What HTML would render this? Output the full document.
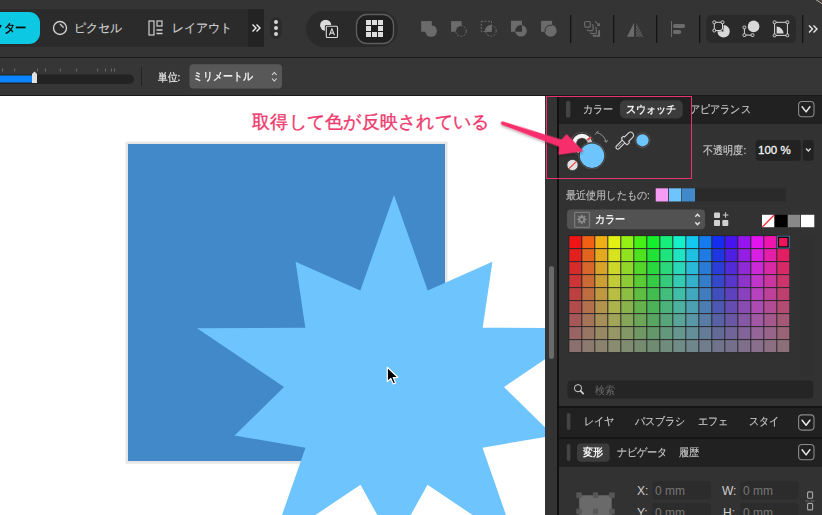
<!DOCTYPE html>
<html lang="ja"><head><meta charset="utf-8">
<style>
*{margin:0;padding:0;box-sizing:border-box}
html,body{width:822px;height:515px;overflow:hidden;background:#333;font-family:"Liberation Sans",sans-serif}
.a{position:absolute}
.t{position:absolute;white-space:nowrap;line-height:1}
</style></head><body>
<!-- TOP TOOLBAR -->
<div class="a" style="left:0;top:0;width:822px;height:57px;background:#343434"></div>
<div class="a" style="left:0;top:57px;width:822px;height:1px;background:#1a1a1a"></div>
<div class="a" style="left:-20px;top:9px;width:284px;height:38px;background:#2b2b2b"></div>
<div class="a" style="left:248px;top:9px;width:16px;height:38px;background:#232323"></div>
<div class="a" style="left:-20px;top:12px;width:60px;height:32px;background:#0cc8e2;border-radius:11px"></div>
<div class="t" style="left:-19px;top:21.5px;font-size:12px;color:#0a0a0a;font-weight:bold;transform:scaleX(0.95);transform-origin:0 0">ベクター</div>
<svg class="a" style="left:0;top:0" width="822" height="57">
 <circle cx="60" cy="28" r="6.5" fill="none" stroke="#cfcfcf" stroke-width="1.4"/>
 <path d="M60.3 24.3 L63.2 27.2" stroke="#cfcfcf" stroke-width="1.3" stroke-linecap="round"/>
 <rect x="149" y="21" width="5" height="14" fill="none" stroke="#cfcfcf" stroke-width="1.2"/>
 <rect x="157" y="21" width="5" height="5" fill="none" stroke="#cfcfcf" stroke-width="1.2"/>
 <path d="M156.5 30 H162.5 M156.5 33.5 H162.5" stroke="#cfcfcf" stroke-width="1.3"/>
 <path d="M252.5 24.5 L256 28 L252.5 31.5 M256.5 24.5 L260 28 L256.5 31.5" fill="none" stroke="#eee" stroke-width="1.4"/>
 <rect x="270" y="17" width="12" height="22" rx="6" fill="#2c2c2c"/>
 <circle cx="276" cy="22" r="2" fill="#d6d6d6"/><circle cx="276" cy="28" r="2" fill="#d6d6d6"/><circle cx="276" cy="34" r="2" fill="#d6d6d6"/>
 <rect x="306" y="11" width="92" height="36" rx="18" fill="#2a2a2a"/>
 <rect x="356.5" y="14.5" width="37" height="29" rx="10.5" fill="#1f1f1f" stroke="#5c5c5c" stroke-width="1.4"/>
 <g fill="#dedede">
  <rect x="366" y="20" width="5" height="5"/><rect x="372" y="20" width="5" height="5"/><rect x="378" y="20" width="5" height="5"/>
  <rect x="366" y="26" width="5" height="5"/><rect x="378" y="26" width="5" height="5"/>
  <rect x="366" y="32" width="5" height="5"/><rect x="372" y="32" width="5" height="5"/><rect x="378" y="32" width="5" height="5"/>
 </g>
 <circle cx="325.7" cy="25.3" r="5.6" fill="#dcdcdc"/>
 <rect x="324.9" y="24.9" width="13.9" height="13.9" rx="1.5" fill="#2a2a2a"/>
 <rect x="326.3" y="26.3" width="11.2" height="11.2" rx="1" fill="#242424" stroke="#dcdcdc" stroke-width="1.1"/>
 <path d="M329.4 35.3 L331.9 28.6 L334.4 35.3 M330.3 33.1 H333.5" fill="none" stroke="#dcdcdc" stroke-width="1.1" stroke-linejoin="round"/>
 <!-- boolean icons -->
 <defs>
  <clipPath id="sq3"><rect x="480.8" y="20.8" width="11" height="11"/></clipPath>
  <clipPath id="sq5"><rect x="541.1" y="20.8" width="11" height="11"/></clipPath>
 </defs>
 <g fill="#6b6b6b">
  <rect x="421.2" y="21.1" width="10.6" height="10.6"/><circle cx="431.1" cy="31" r="5.85"/>
  <rect x="451.1" y="21.1" width="10.6" height="10.6"/>
  <circle cx="490.9" cy="30.8" r="5.8" clip-path="url(#sq3)"/>
  <path fill-rule="evenodd" d="M511 20.8 h11 v11 h-11z M526.8 30.8 a5.8 5.8 0 1 0 -11.6 0 a5.8 5.8 0 1 0 11.6 0z"/>
  <rect x="541.1" y="20.8" width="11" height="11"/><circle cx="550.6" cy="30.8" r="6"/>
 </g>
 <circle cx="461" cy="31" r="5.3" fill="#343434" stroke="#6b6b6b" stroke-width="1" stroke-dasharray="2 1.4"/>
 <rect x="481.3" y="21.3" width="10.2" height="10.2" fill="none" stroke="#6b6b6b" stroke-width="1" stroke-dasharray="2 1.3"/>
 <circle cx="490.9" cy="30.8" r="5.3" fill="none" stroke="#6b6b6b" stroke-width="1" stroke-dasharray="2 1.4"/>
 <circle cx="550.6" cy="30.8" r="5.6" fill="none" stroke="#343434" stroke-width="1" clip-path="url(#sq5)"/>
 <g fill="#141414">
  <rect x="570" y="15" width="1.3" height="28"/><rect x="613" y="15" width="1.3" height="28"/>
  <rect x="656" y="15" width="1.3" height="28"/><rect x="699" y="15" width="1.3" height="28"/>
  <rect x="802" y="15" width="1.3" height="28"/>
 </g>
 <!-- arrange icon -->
 <g fill="none" stroke="#6b6b6b" stroke-width="1.15" stroke-linecap="round">
  <rect x="584.7" y="21.5" width="5.6" height="5.6" rx="1"/>
  <path d="M592.3 24.6 a0.8 0.8 0 0 1 0.8 0.8 v4.4 a0.8 0.8 0 0 1 -0.8 0.8 h-4.2 a0.8 0.8 0 0 1 -0.8 -0.8"/>
  <path d="M595.5 27.6 a0.8 0.8 0 0 1 0.8 0.8 v4.4 a0.8 0.8 0 0 1 -0.8 0.8 h-4.2 a0.8 0.8 0 0 1 -0.8 -0.8"/>
  <path d="M595.4 21.6 l3.8 3.8"/>
 </g>
 <path d="M599.9 26 v-3.4 l-3.4 3.4z" fill="#6b6b6b"/>
 <path d="M598.1 30.2 h2 v6.5 h-7.3 v-1.7 h5.3z" fill="#6b6b6b"/>
 <!-- flip -->
 <defs><pattern id="hatch" width="2.2" height="2.2" patternUnits="userSpaceOnUse" patternTransform="rotate(-45)"><rect width="2.2" height="1.1" fill="#6b6b6b"/></pattern></defs>
 <path d="M634 22.7 V36.7 H627Z" fill="#6b6b6b"/>
 <path d="M636 22.7 V36.7 H643.5Z" fill="url(#hatch)"/>
 <!-- align -->
 <rect x="671" y="21" width="1" height="16" fill="#6b6b6b"/>
 <rect x="673" y="23.9" width="12" height="4" rx="1.6" fill="#6b6b6b"/>
 <rect x="673" y="30.1" width="8.1" height="3.8" rx="1.6" fill="#6b6b6b"/>
 <!-- snap pill -->
 <rect x="706" y="15" width="90" height="28" rx="6" fill="#2a2a2a"/>
 <g fill="#d8d8d8" stroke="none">
  <path d="M723.6 25.1 a6.2 6.2 0 1 1 -6.2 6.2 h6.2z"/>
  <circle cx="753.6" cy="26.4" r="5.8"/>
  <path d="M776.6 26.6 a7 7 0 0 1 7 7 h-7z"/>
 </g>
 <g fill="none" stroke="#d8d8d8" stroke-width="1">
  <rect x="714.3" y="22.3" width="8.2" height="8.2"/>
  <path d="M744.4 27.4 v7.7 h8.1"/>
  <rect x="774.6" y="22.3" width="12.8" height="13.1"/>
 </g>
 <g fill="#2a2a2a" stroke="#d8d8d8" stroke-width="0.9">
  <rect x="712.9" y="20.9" width="2.8" height="2.8" rx="0.9"/><rect x="721.1" y="20.9" width="2.8" height="2.8" rx="0.9"/><rect x="712.9" y="29.1" width="2.8" height="2.8" rx="0.9"/><rect x="721.1" y="29.1" width="2.8" height="2.8" rx="0.9"/><rect x="743.0" y="26.0" width="2.8" height="2.8" rx="0.9"/><rect x="743.0" y="33.7" width="2.8" height="2.8" rx="0.9"/><rect x="751.1" y="33.7" width="2.8" height="2.8" rx="0.9"/><rect x="773.2" y="20.9" width="2.8" height="2.8" rx="0.9"/><rect x="786.0" y="20.9" width="2.8" height="2.8" rx="0.9"/><rect x="773.2" y="34.0" width="2.8" height="2.8" rx="0.9"/><rect x="786.0" y="34.0" width="2.8" height="2.8" rx="0.9"/>
 </g>
 <path d="M809 25.5 L812.5 29 L809 32.5 M813.5 25.5 L817 29 L813.5 32.5" fill="none" stroke="#e8e8e8" stroke-width="1.4"/>
</svg>
<div class="t" style="left:74px;top:22px;font-size:12px;color:#d0d0d0;-webkit-text-stroke:0.15px #d0d0d0">ピクセル</div>
<div class="t" style="left:172px;top:22px;font-size:12px;color:#d0d0d0;-webkit-text-stroke:0.15px #d0d0d0">レイアウト</div>

<!-- SECOND TOOLBAR -->
<div class="a" style="left:0;top:58px;width:822px;height:37px;background:#363636"></div>
<div class="a" style="left:0;top:95px;width:822px;height:1px;background:#1a1a1a"></div>
<svg class="a" style="left:0;top:58px" width="822" height="37">
 <rect x="-10" y="16.5" width="144" height="9.5" rx="4.75" fill="#232323"/>
 <rect x="-10" y="17.5" width="43" height="7" fill="#0a84ff"/>
 <path d="M32 16 L34.5 13.5 L37 16 V25 H32Z" fill="#e2e2e2"/>
 <g fill="#777"><rect x="2" y="10.5" width="0.8" height="3"/><rect x="14.3" y="10.5" width="0.8" height="3"/><rect x="37" y="10.5" width="0.8" height="3"/><rect x="45.2" y="10.5" width="0.8" height="3"/><rect x="59.8" y="10.5" width="0.8" height="3"/><rect x="76.3" y="10.5" width="0.8" height="3"/><rect x="97.3" y="10.5" width="0.8" height="3"/><rect x="105.2" y="10.5" width="0.8" height="3"/><rect x="111" y="10.5" width="0.8" height="3"/><rect x="114" y="10.5" width="0.8" height="3"/></g>
 <rect x="141" y="9" width="1" height="19" fill="#222"/>
 <rect x="189.5" y="6.3" width="92.5" height="24.2" rx="4" fill="#585858"/>
 <path d="M272 17 L274.3 14.5 L276.6 17 M272 20.5 L274.3 23 L276.6 20.5" fill="none" stroke="#ddd" stroke-width="1.1"/>
</svg>
<div class="t" style="left:158px;top:71.5px;font-size:11px;color:#d8d8d8;font-weight:bold;transform:scaleX(0.88);transform-origin:0 0">単位:</div>
<div class="t" style="left:193px;top:71px;font-size:11px;transform:scaleX(0.9);transform-origin:0 0;color:#f0f0f0;font-weight:bold">ミリメートル</div>

<!-- CANVAS -->
<div class="a" style="left:0;top:96px;width:545px;height:419px;background:#fff"></div>
<svg class="a" style="left:0;top:0" width="545" height="515">
 <rect x="125.5" y="141.7" width="322" height="322" fill="#e6e6e6"/>
 <rect x="128" y="144" width="317" height="317" fill="#4189c8"/>
 <polygon fill="#6ec4fc" points="394,195 427.7,290.4 492.4,261.8 482.7,327.7 590.9,328.3 504,387 553.5,435.5 482.5,447.7 516.2,544.2 427.5,484.8 394,545 360.5,484.8 271.8,544.2 305.5,447.7 234.5,435.5 284,387 197.1,328.3 305.3,327.7 295.6,261.8 360.3,290.4"/>
 <path d="M387.3 367.3 L387.3 381.6 L390.8 378.4 L393.3 384 L395.6 383 L393.2 377.6 L397.8 377.3Z" fill="#000" stroke="#fff" stroke-width="1.2" stroke-linejoin="round"/>

</svg>
<div class="t" style="left:252px;top:113px;font-size:18px;letter-spacing:0.25px;color:#ef3a6e;-webkit-text-stroke:0.35px #ef3a6e">取得して色が反映されている</div>
<div class="a" style="left:545px;top:96px;width:12px;height:419px;background:#333"></div>
<div class="a" style="left:548.5px;top:266px;width:5.5px;height:93px;background:#6a6a6a;border-radius:3px"></div>
<div class="a" style="left:557px;top:96px;width:2px;height:419px;background:#111"></div>

<!-- PANEL -->
<div class="a" style="left:559px;top:96px;width:263px;height:419px;background:#323232"></div>
<div class="a" style="left:559px;top:96px;width:263px;height:28px;background:#212121"></div>
<div class="a" style="left:559px;top:406px;width:263px;height:2px;background:#151515"></div>
<div class="a" style="left:559px;top:408px;width:263px;height:29px;background:#212121"></div>
<div class="a" style="left:559px;top:437px;width:263px;height:2px;background:#151515"></div>
<div class="a" style="left:559px;top:439px;width:263px;height:28px;background:#212121"></div>
<svg class="a" style="left:559px;top:96px" width="263" height="419">
 <rect x="7" y="4.8" width="4.4" height="17" rx="2.2" fill="#444"/>
 <rect x="61" y="4.2" width="62.7" height="18.3" rx="5" fill="#3c3c3c"/>
 <rect x="239.6" y="5.5" width="15.4" height="15.2" rx="3.5" fill="none" stroke="#8a8a8a" stroke-width="1.1"/>
 <path d="M243.1 10.8 L247.1 15.9 L250.9 10.8" fill="none" stroke="#e8e8e8" stroke-width="1.5" stroke-linejoin="round" stroke-linecap="round"/>
 <!-- color wells -->
 <circle cx="23" cy="47.8" r="11.9" fill="#585858"/>
 <circle cx="23" cy="47.8" r="11" fill="#303030"/>
 <circle cx="23" cy="47.8" r="10" fill="#f4f4f4"/>
 <path d="M30.6 41.3 A10 10 0 0 1 33 47.8 L23 47.8Z" fill="#c8c8c8"/>
 <circle cx="23" cy="47.8" r="6" fill="#5a5a5a"/>
 <circle cx="23" cy="47.8" r="5.2" fill="#2e2e2e"/>
 <path d="M28.4 44 L32 41.1" stroke="#e44848" stroke-width="1.8"/>
 <circle cx="13.5" cy="69" r="5.6" fill="#e2e2e2" stroke="#3a3a3a" stroke-width="0.8"/>
 <path d="M10 72.6 L17.2 65.6" stroke="#ee3b3b" stroke-width="1.2"/>
 <circle cx="33" cy="59.7" r="13.6" fill="#575757"/>
 <circle cx="33" cy="59.7" r="12.8" fill="#2b2b2b"/>
 <circle cx="33" cy="59.7" r="12.2" fill="#6ec4fc"/>
 <path d="M37.5 36.5 Q44.5 38 47.3 45.8" fill="none" stroke="#9a9a9a" stroke-width="0.9"/>
 <path d="M36.2 38.6 L37.5 36.4 L39.5 35.2" fill="none" stroke="#9a9a9a" stroke-width="0.9"/>
 <path d="M45.3 45 L47.3 46.2 L48.8 44.2" fill="none" stroke="#9a9a9a" stroke-width="0.9"/>
 <g transform="translate(57.1,53) rotate(-45) scale(0.92)" fill="#333" stroke="#d4d4d4" stroke-width="1.2">
  <rect x="0.6" y="-2" width="12.5" height="4" rx="2"/>
  <path d="M12.5 -4.3 h2.2 a1 1 0 0 1 1 1 v0.5 h6 a3.3 3.3 0 0 1 0 6.6 h-6 v0.5 a1 1 0 0 1 -1 1 h-2.2 a1 1 0 0 1 -1 -1 v-6.6 a1 1 0 0 1 1 -1z"/>
 </g>
 <g transform="translate(57.1,53) rotate(-45) scale(0.92)" fill="#d4d4d4">
  <rect x="3" y="-0.45" width="0.9" height="0.9"/><rect x="4.8" y="-0.45" width="0.9" height="0.9"/><rect x="6.6" y="-0.45" width="0.9" height="0.9"/><rect x="8.4" y="-0.45" width="0.9" height="0.9"/>
 </g>
 <circle cx="83.5" cy="44.3" r="7.6" fill="#3c3c3c" stroke="#4e4e4e" stroke-width="1"/>
 <circle cx="83.5" cy="44.3" r="6.1" fill="#6ec4fc"/>
 <!-- opacity field -->
 <rect x="196.8" y="44" width="45" height="20.8" rx="3" fill="#222"/>
 <rect x="243.9" y="44" width="10.8" height="20.8" rx="3" fill="#222"/>
 <path d="M247 52.5 L249.3 55 L251.6 52.5" fill="none" stroke="#ddd" stroke-width="1.2"/>
 <!-- recent -->
 <rect x="96.7" y="92.3" width="130.3" height="13.2" fill="#2a2a2a"/>
 <rect x="96.7" y="92.3" width="12.5" height="13.2" fill="#f79cf5"/>
 <rect x="110" y="92.3" width="12.3" height="13.2" fill="#6ec4fc"/>
 <rect x="123" y="92.3" width="13" height="13.2" fill="#4189c8"/>
 <!-- dropdown -->
 <rect x="8" y="113.6" width="138" height="19.7" rx="4" fill="#525252"/>
 <rect x="15.6" y="116.4" width="14.9" height="14.9" rx="1" fill="none" stroke="#7a7a7a" stroke-width="1.3"/>
 <path fill="#8a8a8a" fill-rule="evenodd" d="M26.22 122.64 L27.55 122.68 L27.55 124.12 L26.22 124.16 L26.14 124.43 L25.90 125.02 L25.76 125.28 L26.66 126.25 L25.65 127.26 L24.68 126.36 L24.43 126.50 L23.85 126.74 L23.56 126.82 L23.52 128.15 L22.08 128.15 L22.04 126.82 L21.77 126.74 L21.18 126.50 L20.92 126.36 L19.95 127.26 L18.94 126.25 L19.84 125.28 L19.70 125.03 L19.46 124.45 L19.38 124.16 L18.05 124.12 L18.05 122.68 L19.38 122.64 L19.46 122.37 L19.70 121.78 L19.84 121.52 L18.94 120.55 L19.95 119.54 L20.92 120.44 L21.17 120.30 L21.75 120.06 L22.04 119.98 L22.08 118.65 L23.52 118.65 L23.56 119.98 L23.83 120.06 L24.42 120.30 L24.68 120.44 L25.65 119.54 L26.66 120.55 L25.76 121.52 L25.90 121.77 L26.14 122.35Z M24.30 123.40 A1.5 1.5 0 1 0 21.30 123.40 A1.5 1.5 0 1 0 24.30 123.40Z"/>
 <path d="M136.3 120.8 L138.5 118.4 L140.7 120.8 M136.3 126.2 L138.5 128.6 L140.7 126.2" fill="none" stroke="#e6e6e6" stroke-width="1.4"/>
 <g fill="#d0d0d0">
  <rect x="155" y="116.6" width="6" height="5.3" rx="1"/>
  <rect x="155" y="124" width="6" height="6" rx="1"/><rect x="163.3" y="124" width="6" height="6" rx="1"/>
  <path d="M166.1 116.2 h1 v2.3 h2.3 v1 h-2.3 v2.3 h-1 v-2.3 h-2.3 v-1 h2.3z"/>
 </g>
 <rect x="203" y="118.8" width="12.4" height="12.4" fill="#fff"/>
 <path d="M203.3 131 L215.2 119" stroke="#f22" stroke-width="1.2"/>
 <rect x="215.6" y="118.8" width="12.7" height="12.4" fill="#000"/>
 <rect x="228.9" y="118.8" width="12.3" height="12.4" fill="#888"/>
 <rect x="242" y="118.8" width="13.3" height="12.4" fill="#fff"/>
 <!-- grid -->
 <rect x="241" y="140" width="15" height="140" fill="#303030"/>
 <g transform="translate(9.3,139.1)">
 <rect x="0" y="0" width="221.5" height="118" fill="#272727"/>
<rect x="1" y="1" width="12" height="12" fill="#f01414"/>
<rect x="14" y="1" width="12" height="12" fill="#f06114"/>
<rect x="27" y="1" width="12" height="12" fill="#f0af14"/>
<rect x="40" y="1" width="12" height="12" fill="#e3f014"/>
<rect x="53" y="1" width="12" height="12" fill="#95f014"/>
<rect x="66" y="1" width="12" height="12" fill="#47f014"/>
<rect x="79" y="1" width="12" height="12" fill="#14f02d"/>
<rect x="92" y="1" width="12" height="12" fill="#14f07b"/>
<rect x="105" y="1" width="12" height="12" fill="#14f0c9"/>
<rect x="118" y="1" width="12" height="12" fill="#14c9f0"/>
<rect x="131" y="1" width="12" height="12" fill="#147bf0"/>
<rect x="144" y="1" width="12" height="12" fill="#142df0"/>
<rect x="157" y="1" width="12" height="12" fill="#4714f0"/>
<rect x="170" y="1" width="12" height="12" fill="#9514f0"/>
<rect x="183" y="1" width="12" height="12" fill="#e314f0"/>
<rect x="196" y="1" width="12" height="12" fill="#f014af"/>
<rect x="209" y="1" width="12" height="12" fill="#f01461"/>
<rect x="1" y="14" width="12" height="12" fill="#e31f1f"/>
<rect x="14" y="14" width="12" height="12" fill="#e3641f"/>
<rect x="27" y="14" width="12" height="12" fill="#e3aa1f"/>
<rect x="40" y="14" width="12" height="12" fill="#d8e31f"/>
<rect x="53" y="14" width="12" height="12" fill="#92e31f"/>
<rect x="66" y="14" width="12" height="12" fill="#4de31f"/>
<rect x="79" y="14" width="12" height="12" fill="#1fe336"/>
<rect x="92" y="14" width="12" height="12" fill="#1fe37b"/>
<rect x="105" y="14" width="12" height="12" fill="#1fe3c1"/>
<rect x="118" y="14" width="12" height="12" fill="#1fc1e3"/>
<rect x="131" y="14" width="12" height="12" fill="#1f7be3"/>
<rect x="144" y="14" width="12" height="12" fill="#1f36e3"/>
<rect x="157" y="14" width="12" height="12" fill="#4d1fe3"/>
<rect x="170" y="14" width="12" height="12" fill="#921fe3"/>
<rect x="183" y="14" width="12" height="12" fill="#d81fe3"/>
<rect x="196" y="14" width="12" height="12" fill="#e31faa"/>
<rect x="209" y="14" width="12" height="12" fill="#e31f64"/>
<rect x="1" y="27" width="12" height="12" fill="#d72a2a"/>
<rect x="14" y="27" width="12" height="12" fill="#d7672a"/>
<rect x="27" y="27" width="12" height="12" fill="#d7a42a"/>
<rect x="40" y="27" width="12" height="12" fill="#cdd72a"/>
<rect x="53" y="27" width="12" height="12" fill="#90d72a"/>
<rect x="66" y="27" width="12" height="12" fill="#53d72a"/>
<rect x="79" y="27" width="12" height="12" fill="#2ad73e"/>
<rect x="92" y="27" width="12" height="12" fill="#2ad77b"/>
<rect x="105" y="27" width="12" height="12" fill="#2ad7b9"/>
<rect x="118" y="27" width="12" height="12" fill="#2ab9d7"/>
<rect x="131" y="27" width="12" height="12" fill="#2a7bd7"/>
<rect x="144" y="27" width="12" height="12" fill="#2a3ed7"/>
<rect x="157" y="27" width="12" height="12" fill="#532ad7"/>
<rect x="170" y="27" width="12" height="12" fill="#902ad7"/>
<rect x="183" y="27" width="12" height="12" fill="#cd2ad7"/>
<rect x="196" y="27" width="12" height="12" fill="#d72aa4"/>
<rect x="209" y="27" width="12" height="12" fill="#d72a67"/>
<rect x="1" y="40" width="12" height="12" fill="#cb3535"/>
<rect x="14" y="40" width="12" height="12" fill="#cb6a35"/>
<rect x="27" y="40" width="12" height="12" fill="#cb9f35"/>
<rect x="40" y="40" width="12" height="12" fill="#c2cb35"/>
<rect x="53" y="40" width="12" height="12" fill="#8dcb35"/>
<rect x="66" y="40" width="12" height="12" fill="#58cb35"/>
<rect x="79" y="40" width="12" height="12" fill="#35cb47"/>
<rect x="92" y="40" width="12" height="12" fill="#35cb7c"/>
<rect x="105" y="40" width="12" height="12" fill="#35cbb0"/>
<rect x="118" y="40" width="12" height="12" fill="#35b0cb"/>
<rect x="131" y="40" width="12" height="12" fill="#357ccb"/>
<rect x="144" y="40" width="12" height="12" fill="#3547cb"/>
<rect x="157" y="40" width="12" height="12" fill="#5835cb"/>
<rect x="170" y="40" width="12" height="12" fill="#8d35cb"/>
<rect x="183" y="40" width="12" height="12" fill="#c235cb"/>
<rect x="196" y="40" width="12" height="12" fill="#cb359f"/>
<rect x="209" y="40" width="12" height="12" fill="#cb356a"/>
<rect x="1" y="53" width="12" height="12" fill="#be4141"/>
<rect x="14" y="53" width="12" height="12" fill="#be6d41"/>
<rect x="27" y="53" width="12" height="12" fill="#be9941"/>
<rect x="40" y="53" width="12" height="12" fill="#b7be41"/>
<rect x="53" y="53" width="12" height="12" fill="#8bbe41"/>
<rect x="66" y="53" width="12" height="12" fill="#5ebe41"/>
<rect x="79" y="53" width="12" height="12" fill="#41be4f"/>
<rect x="92" y="53" width="12" height="12" fill="#41be7c"/>
<rect x="105" y="53" width="12" height="12" fill="#41bea8"/>
<rect x="118" y="53" width="12" height="12" fill="#41a8be"/>
<rect x="131" y="53" width="12" height="12" fill="#417cbe"/>
<rect x="144" y="53" width="12" height="12" fill="#414fbe"/>
<rect x="157" y="53" width="12" height="12" fill="#5e41be"/>
<rect x="170" y="53" width="12" height="12" fill="#8b41be"/>
<rect x="183" y="53" width="12" height="12" fill="#b741be"/>
<rect x="196" y="53" width="12" height="12" fill="#be4199"/>
<rect x="209" y="53" width="12" height="12" fill="#be416d"/>
<rect x="1" y="66" width="12" height="12" fill="#b24c4c"/>
<rect x="14" y="66" width="12" height="12" fill="#b2704c"/>
<rect x="27" y="66" width="12" height="12" fill="#b2944c"/>
<rect x="40" y="66" width="12" height="12" fill="#acb24c"/>
<rect x="53" y="66" width="12" height="12" fill="#88b24c"/>
<rect x="66" y="66" width="12" height="12" fill="#64b24c"/>
<rect x="79" y="66" width="12" height="12" fill="#4cb258"/>
<rect x="92" y="66" width="12" height="12" fill="#4cb27c"/>
<rect x="105" y="66" width="12" height="12" fill="#4cb2a0"/>
<rect x="118" y="66" width="12" height="12" fill="#4ca0b2"/>
<rect x="131" y="66" width="12" height="12" fill="#4c7cb2"/>
<rect x="144" y="66" width="12" height="12" fill="#4c58b2"/>
<rect x="157" y="66" width="12" height="12" fill="#644cb2"/>
<rect x="170" y="66" width="12" height="12" fill="#884cb2"/>
<rect x="183" y="66" width="12" height="12" fill="#ac4cb2"/>
<rect x="196" y="66" width="12" height="12" fill="#b24c94"/>
<rect x="209" y="66" width="12" height="12" fill="#b24c70"/>
<rect x="1" y="79" width="12" height="12" fill="#a55858"/>
<rect x="14" y="79" width="12" height="12" fill="#a57358"/>
<rect x="27" y="79" width="12" height="12" fill="#a58e58"/>
<rect x="40" y="79" width="12" height="12" fill="#a1a558"/>
<rect x="53" y="79" width="12" height="12" fill="#85a558"/>
<rect x="66" y="79" width="12" height="12" fill="#6aa558"/>
<rect x="79" y="79" width="12" height="12" fill="#58a561"/>
<rect x="92" y="79" width="12" height="12" fill="#58a57c"/>
<rect x="105" y="79" width="12" height="12" fill="#58a597"/>
<rect x="118" y="79" width="12" height="12" fill="#5897a5"/>
<rect x="131" y="79" width="12" height="12" fill="#587ca5"/>
<rect x="144" y="79" width="12" height="12" fill="#5861a5"/>
<rect x="157" y="79" width="12" height="12" fill="#6a58a5"/>
<rect x="170" y="79" width="12" height="12" fill="#8558a5"/>
<rect x="183" y="79" width="12" height="12" fill="#a158a5"/>
<rect x="196" y="79" width="12" height="12" fill="#a5588e"/>
<rect x="209" y="79" width="12" height="12" fill="#a55873"/>
<rect x="1" y="92" width="12" height="12" fill="#986464"/>
<rect x="14" y="92" width="12" height="12" fill="#987664"/>
<rect x="27" y="92" width="12" height="12" fill="#988964"/>
<rect x="40" y="92" width="12" height="12" fill="#959864"/>
<rect x="53" y="92" width="12" height="12" fill="#839864"/>
<rect x="66" y="92" width="12" height="12" fill="#709864"/>
<rect x="79" y="92" width="12" height="12" fill="#64986a"/>
<rect x="92" y="92" width="12" height="12" fill="#64987c"/>
<rect x="105" y="92" width="12" height="12" fill="#64988f"/>
<rect x="118" y="92" width="12" height="12" fill="#648f98"/>
<rect x="131" y="92" width="12" height="12" fill="#647c98"/>
<rect x="144" y="92" width="12" height="12" fill="#646a98"/>
<rect x="157" y="92" width="12" height="12" fill="#706498"/>
<rect x="170" y="92" width="12" height="12" fill="#836498"/>
<rect x="183" y="92" width="12" height="12" fill="#956498"/>
<rect x="196" y="92" width="12" height="12" fill="#986489"/>
<rect x="209" y="92" width="12" height="12" fill="#986476"/>
<rect x="1" y="105" width="12" height="12" fill="#8c6f6f"/>
<rect x="14" y="105" width="12" height="12" fill="#8c796f"/>
<rect x="27" y="105" width="12" height="12" fill="#8c836f"/>
<rect x="40" y="105" width="12" height="12" fill="#8a8c6f"/>
<rect x="53" y="105" width="12" height="12" fill="#808c6f"/>
<rect x="66" y="105" width="12" height="12" fill="#768c6f"/>
<rect x="79" y="105" width="12" height="12" fill="#6f8c73"/>
<rect x="92" y="105" width="12" height="12" fill="#6f8c7d"/>
<rect x="105" y="105" width="12" height="12" fill="#6f8c87"/>
<rect x="118" y="105" width="12" height="12" fill="#6f878c"/>
<rect x="131" y="105" width="12" height="12" fill="#6f7d8c"/>
<rect x="144" y="105" width="12" height="12" fill="#6f738c"/>
<rect x="157" y="105" width="12" height="12" fill="#766f8c"/>
<rect x="170" y="105" width="12" height="12" fill="#806f8c"/>
<rect x="183" y="105" width="12" height="12" fill="#8a6f8c"/>
<rect x="196" y="105" width="12" height="12" fill="#8c6f83"/>
<rect x="209" y="105" width="12" height="12" fill="#8c6f79"/>
 <rect x="208.6" y="0.6" width="12.8" height="12.8" fill="#4f72a0"/>
 <rect x="209.6" y="1.6" width="10.8" height="10.8" fill="#000"/>
 <rect x="210.8" y="2.8" width="8.4" height="8.4" fill="#f0145a"/>
 </g>
 <!-- search -->
 <rect x="8.4" y="284.6" width="246" height="17.8" rx="4" fill="#252525"/>
 <circle cx="19" cy="292.2" r="3.6" fill="none" stroke="#cfcfcf" stroke-width="1"/>
 <path d="M21.6 294.9 L24.2 297.6" stroke="#cfcfcf" stroke-width="1.7" stroke-linecap="round"/>
 <!-- layers header -->
 <rect x="7.8" y="317" width="3.6" height="17" rx="1.8" fill="#444"/>
 <rect x="239.6" y="318.9" width="15.4" height="15.2" rx="3.5" fill="none" stroke="#8a8a8a" stroke-width="1.1"/>
 <path d="M243.1 324.2 L247.1 329.3 L250.9 324.2" fill="none" stroke="#e8e8e8" stroke-width="1.5" stroke-linejoin="round" stroke-linecap="round"/>
 <!-- transform header -->
 <rect x="7.8" y="348" width="3.6" height="17" rx="1.8" fill="#444"/>
 <rect x="18" y="347.6" width="32.6" height="18.2" rx="4" fill="#3c3c3c"/>
 <rect x="239.6" y="348.5" width="15.4" height="15.2" rx="3.5" fill="none" stroke="#8a8a8a" stroke-width="1.1"/>
 <path d="M243.1 353.8 L247.1 358.9 L250.9 353.8" fill="none" stroke="#e8e8e8" stroke-width="1.5" stroke-linejoin="round" stroke-linecap="round"/>
 <!-- transform body -->
 <rect x="93.4" y="385" width="58.6" height="18.2" rx="3" fill="#2c2c2c"/>
 <rect x="181" y="385" width="58.6" height="18.2" rx="3" fill="#2c2c2c"/>
 <rect x="93.4" y="407" width="58.6" height="18.2" rx="3" fill="#2c2c2c"/>
 <rect x="181" y="407" width="58.6" height="18.2" rx="3" fill="#2c2c2c"/>
 <rect x="20.2" y="399.3" width="32.5" height="22" fill="#6a6a6a"/>
 <g fill="#575757"><rect x="17.3" y="396.4" width="5.5" height="5.5"/><rect x="34" y="396.4" width="5" height="5.5"/><rect x="50.2" y="396.4" width="5.5" height="5.5"/>
 <rect x="17.3" y="412.8" width="5.5" height="5.5"/><rect x="34" y="412.8" width="5" height="5.5"/><rect x="50.2" y="412.8" width="5.5" height="5.5"/></g>
 <g fill="none" stroke="#a8a8a8" stroke-width="1.1"><rect x="248.6" y="395.9" width="5" height="6.3" rx="1"/><rect x="248.6" y="407.4" width="5" height="6.5" rx="1"/></g>
 <path d="M246.2 405 h3.5 M251.5 405 h3.8" stroke="#6a6a6a" stroke-width="1.2"/>
</svg>
<div class="t" style="left:583px;top:104px;font-size:11px;transform:scaleX(0.92);transform-origin:0 0;color:#c4c4c4;-webkit-text-stroke:0.2px #c4c4c4">カラー</div>
<div class="t" style="left:625.5px;top:104px;font-size:11px;transform:scaleX(0.92);transform-origin:0 0;color:#f4f4f4;font-weight:bold">スウォッチ</div>
<div class="t" style="left:690px;top:104px;font-size:11px;transform:scaleX(0.92);transform-origin:0 0;color:#c4c4c4;-webkit-text-stroke:0.2px #c4c4c4">アピアランス</div>
<div class="t" style="left:703px;top:145px;font-size:11px;transform:scaleX(0.92);transform-origin:0 0;color:#c8c8c8;-webkit-text-stroke:0.15px #c8c8c8">不透明度:</div>
<div class="t" style="left:758px;top:145px;font-size:11.5px;color:#f4f4f4;-webkit-text-stroke:0.3px #f4f4f4">100 %</div>
<div class="t" style="left:566px;top:190px;font-size:11px;transform:scaleX(0.92);transform-origin:0 0;color:#bdbdbd;-webkit-text-stroke:0.15px #bdbdbd">最近使用したもの:</div>
<div class="t" style="left:595px;top:214px;font-size:11px;transform:scaleX(0.92);transform-origin:0 0;color:#f0f0f0;font-weight:bold">カラー</div>
<div class="t" style="left:595px;top:385px;font-size:11px;transform:scaleX(0.92);transform-origin:0 0;color:#6a6a6a">検索</div>
<div class="t" style="left:584px;top:416px;font-size:11px;transform:scaleX(0.92);transform-origin:0 0;color:#c8c8c8;-webkit-text-stroke:0.15px #c8c8c8">レイヤ</div>
<div class="t" style="left:635px;top:416px;font-size:11px;transform:scaleX(0.92);transform-origin:0 0;color:#c8c8c8;-webkit-text-stroke:0.15px #c8c8c8">パスブラシ</div>
<div class="t" style="left:698px;top:416px;font-size:11px;transform:scaleX(0.92);transform-origin:0 0;color:#c8c8c8;-webkit-text-stroke:0.15px #c8c8c8">エフェ</div>
<div class="t" style="left:749px;top:416px;font-size:11px;transform:scaleX(0.92);transform-origin:0 0;color:#c8c8c8;-webkit-text-stroke:0.15px #c8c8c8">スタイ</div>
<div class="t" style="left:583px;top:447px;font-size:11px;transform:scaleX(0.92);transform-origin:0 0;color:#f0f0f0;font-weight:bold">変形</div>
<div class="t" style="left:617px;top:447px;font-size:11px;transform:scaleX(0.92);transform-origin:0 0;color:#c8c8c8;-webkit-text-stroke:0.15px #c8c8c8">ナビゲータ</div>
<div class="t" style="left:679px;top:447px;font-size:11px;transform:scaleX(0.92);transform-origin:0 0;color:#c8c8c8;-webkit-text-stroke:0.15px #c8c8c8">履歴</div>
<div class="t" style="left:637px;top:485px;font-size:12px;color:#cfcfcf">X:</div>
<div class="t" style="left:655px;top:485px;font-size:12px;color:#777">0 mm</div>
<div class="t" style="left:722px;top:485px;font-size:12px;color:#cfcfcf">W:</div>
<div class="t" style="left:743px;top:485px;font-size:12px;color:#777">0 mm</div>
<div class="t" style="left:637px;top:507px;font-size:12px;color:#cfcfcf">Y:</div>
<div class="t" style="left:655px;top:507px;font-size:12px;color:#777">0 mm</div>
<div class="t" style="left:723px;top:507px;font-size:12px;color:#cfcfcf">H:</div>
<div class="t" style="left:743px;top:507px;font-size:12px;color:#777">0 mm</div>
<!-- pink highlight rect -->
<div class="a" style="left:545.5px;top:96px;width:146.5px;height:83px;border:1.5px solid #e8346c"></div>
<svg class="a" style="left:812px;top:0" width="10" height="6"><path d="M3.5 -0.6 L10.5 3.9" stroke="#b8b8b8" stroke-width="1"/><path d="M7 -1.2 L11 1.6" stroke="#6a4a38" stroke-width="1.6"/></svg>
<svg class="a" style="left:0;top:0" width="822" height="515">
 <defs><filter id="sh" x="-20%" y="-50%" width="140%" height="200%"><feDropShadow dx="0.6" dy="1.6" stdDeviation="1.1" flood-color="#000" flood-opacity="0.28"/></filter></defs>
 <g transform="translate(502.6,123.2) rotate(19.1)" filter="url(#sh)">
  <path d="M0 -1.8 L61 -3.8 L64 -10.8 L85.6 0 L63.2 11.6 L61 3.8 L0 1.8 A1.8 1.8 0 0 1 0 -1.8Z" fill="#f82e6c"/>
 </g>
</svg>
</body></html>
